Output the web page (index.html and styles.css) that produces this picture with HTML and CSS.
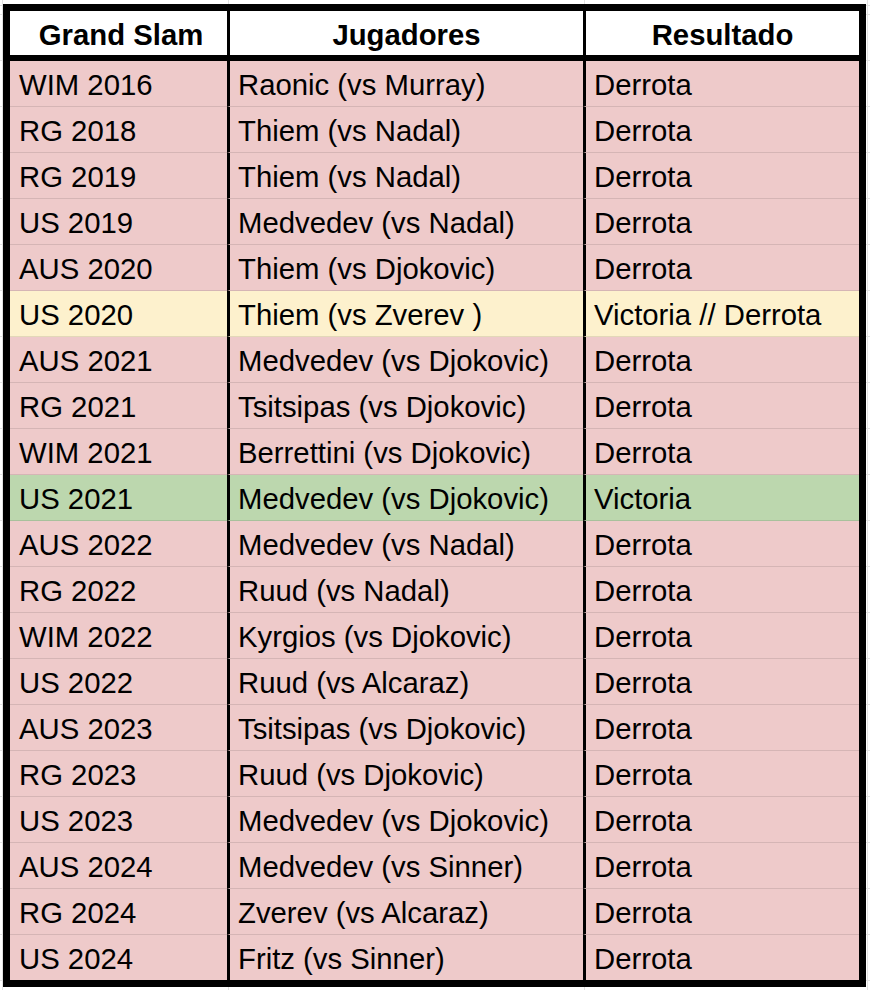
FILE: index.html
```html
<!DOCTYPE html>
<html lang="es">
<head>
<meta charset="utf-8">
<title>Grand Slam</title>
<link rel="stylesheet" href="styles.css">
</head>
<body>
<div class="sheet">
  <div class="cell head">Grand Slam</div>
  <div class="cell head sep">Jugadores</div>
  <div class="cell head sep">Resultado</div>

  <div class="cell loss first">WIM 2016</div><div class="cell loss sep">Raonic (vs Murray)</div><div class="cell loss sep">Derrota</div>
  <div class="cell loss first">RG 2018</div><div class="cell loss sep">Thiem (vs Nadal)</div><div class="cell loss sep">Derrota</div>
  <div class="cell loss first">RG 2019</div><div class="cell loss sep">Thiem (vs Nadal)</div><div class="cell loss sep">Derrota</div>
  <div class="cell loss first">US 2019</div><div class="cell loss sep">Medvedev (vs Nadal)</div><div class="cell loss sep">Derrota</div>
  <div class="cell loss first">AUS 2020</div><div class="cell loss sep">Thiem (vs Djokovic)</div><div class="cell loss sep">Derrota</div>
  <div class="cell mixed first">US 2020</div><div class="cell mixed sep">Thiem (vs Zverev )</div><div class="cell mixed sep">Victoria // Derrota</div>
  <div class="cell loss first">AUS 2021</div><div class="cell loss sep">Medvedev (vs Djokovic)</div><div class="cell loss sep">Derrota</div>
  <div class="cell loss first">RG 2021</div><div class="cell loss sep">Tsitsipas (vs Djokovic)</div><div class="cell loss sep">Derrota</div>
  <div class="cell loss first">WIM 2021</div><div class="cell loss sep">Berrettini (vs Djokovic)</div><div class="cell loss sep">Derrota</div>
  <div class="cell win first">US 2021</div><div class="cell win sep">Medvedev (vs Djokovic)</div><div class="cell win sep">Victoria</div>
  <div class="cell loss first">AUS 2022</div><div class="cell loss sep">Medvedev (vs Nadal)</div><div class="cell loss sep">Derrota</div>
  <div class="cell loss first">RG 2022</div><div class="cell loss sep">Ruud (vs Nadal)</div><div class="cell loss sep">Derrota</div>
  <div class="cell loss first">WIM 2022</div><div class="cell loss sep">Kyrgios (vs Djokovic)</div><div class="cell loss sep">Derrota</div>
  <div class="cell loss first">US 2022</div><div class="cell loss sep">Ruud (vs Alcaraz)</div><div class="cell loss sep">Derrota</div>
  <div class="cell loss first">AUS 2023</div><div class="cell loss sep">Tsitsipas (vs Djokovic)</div><div class="cell loss sep">Derrota</div>
  <div class="cell loss first">RG 2023</div><div class="cell loss sep">Ruud (vs Djokovic)</div><div class="cell loss sep">Derrota</div>
  <div class="cell loss first">US 2023</div><div class="cell loss sep">Medvedev (vs Djokovic)</div><div class="cell loss sep">Derrota</div>
  <div class="cell loss first">AUS 2024</div><div class="cell loss sep">Medvedev (vs Sinner)</div><div class="cell loss sep">Derrota</div>
  <div class="cell loss first">RG 2024</div><div class="cell loss sep">Zverev (vs Alcaraz)</div><div class="cell loss sep">Derrota</div>
  <div class="cell loss first last">US 2024</div><div class="cell loss sep last">Fritz (vs Sinner)</div><div class="cell loss sep last">Derrota</div>
</div>
</body>
</html>
```
FILE: styles.css
```css
html, body {
  margin: 0;
  height: 100%;
}

body {
  padding: 4px 0 0 3px;
  box-sizing: border-box;
  background-color: #fff;
  background-image:
    linear-gradient(#e2e2e2, #e2e2e2),
    linear-gradient(#e2e2e2, #e2e2e2),
    linear-gradient(#e2e2e2, #e2e2e2),
    linear-gradient(#e2e2e2, #e2e2e2),
    linear-gradient(#e2e2e2, #e2e2e2),
    repeating-linear-gradient(to bottom, #e2e2e2 0 1px, transparent 1px 46px);
  background-size: 1px 100%, 1px 100%, 1px 100%, 1px 100%, 100% 1px, 100% 100%;
  background-position: 2px 0, 228px 0, 584px 0, 867px 0, 0 5px, 0 14px;
  background-repeat: no-repeat, no-repeat, no-repeat, no-repeat, no-repeat, repeat;
  font-family: "Liberation Sans", Arial, sans-serif;
  color: #000;
}

.sheet {
  display: grid;
  grid-template-columns: 217px 356px 276px;
  width: max-content;
  border: 7px solid #000;
  background: #fff;
}

.cell {
  box-sizing: border-box;
  height: 46px;
  display: flex;
  align-items: center;
  padding: 3px 8px 0 8px;
  font-size: 29.3px;
  white-space: nowrap;
  border-bottom: 1px solid rgba(0, 0, 0, 0.1);
}

.cell.first {
  padding-left: 9px;
}

.cell.last {
  height: 45px;
  border-bottom: none;
}

.sep {
  border-left: 3px solid #000;
}

.head {
  height: 50px;
  justify-content: center;
  font-weight: bold;
  padding: 3px 0 0 5px;
  background: #fff;
  border-bottom: 6px solid #000;
}

.sep.head {
  padding-left: 0;
}

.loss {
  background-color: #eecaca;
}

.mixed {
  background-color: #fdf1cd;
}

.win {
  background-color: #bcd7ae;
}
```
